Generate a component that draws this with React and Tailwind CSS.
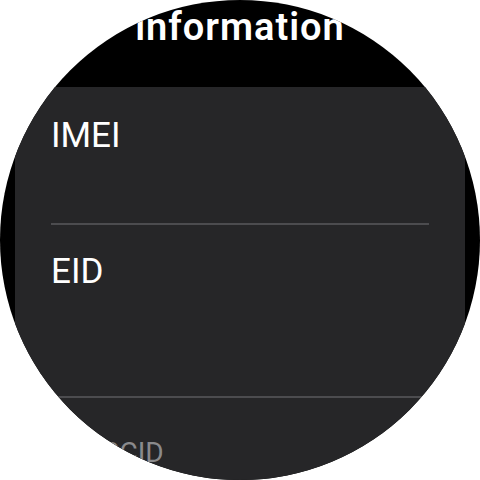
export default function App() {
  const font = { fontFamily: 'Roboto, "Noto Sans", sans-serif' };

  return (
    <div className="w-[480px] h-[480px] bg-white" style={font}>
      <div className="w-[480px] h-[480px] rounded-full bg-black overflow-hidden flex flex-col">
        {/* scrolled header, partly under the bezel */}
        <h1 className="h-[87px] shrink-0 pt-[8px] text-center text-white text-[38px] font-semibold tracking-[1px] leading-none">
          information
        </h1>

        <div className="mx-[15px] flex-1 min-h-0 rounded-t-[26px] bg-[#262628]">
          <div className="h-[136px] px-[36px] pt-[31px]">
            <p className="text-white text-[35px] leading-none">IMEI</p>
          </div>
          <div className="mx-[36px] h-[2px] bg-[#4c4c4f]" />

          <div className="h-[171px] px-[36px] pt-[29px]">
            <p className="text-white text-[35px] leading-none">EID</p>
          </div>
          <div className="mx-[36px] h-[2px] bg-[#4c4c4f]" />

          <div className="pl-[42px] pr-[36px] pt-[51px] scale-[0.8] origin-top">
            <p className="text-[#8a8a8c] text-[35px] leading-none">ICCID</p>
          </div>
        </div>
      </div>
    </div>
  );
}
